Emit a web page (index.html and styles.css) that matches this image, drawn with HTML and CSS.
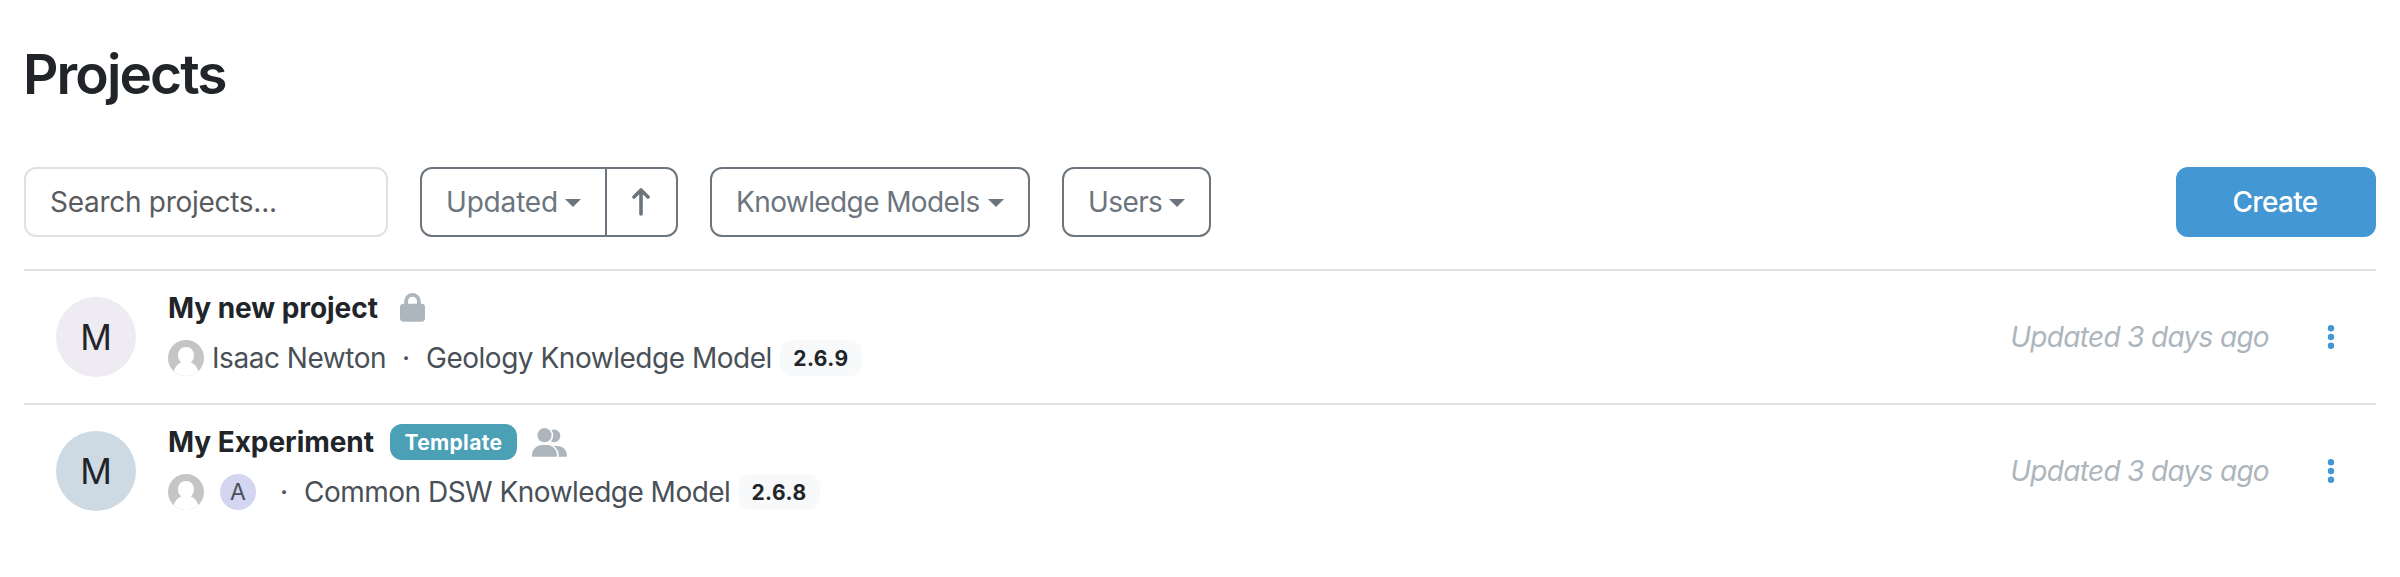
FILE: index.html
```html
<!DOCTYPE html>
<html lang="en">
<head>
<meta charset="utf-8">
<title>Projects</title>
<link rel="stylesheet" href="styles.css">
</head>
<body>
<svg class="defs" aria-hidden="true">
  <symbol id="person" viewBox="0 0 36 36">
    <circle cx="18" cy="18" r="18" fill="#c5c5c5"/>
    <path fill="#fff" d="M18 7c4.700 0 8 3.500 8 8.200 0 3-1.300 5.700-3.200 7.200 3.700 1.300 6.300 4.300 7.500 8.600C26.800 34.400 22.600 36 18 36S9.200 34.400 5.700 31c1.200-4.300 3.800-7.300 7.500-8.600C11.300 20.900 10 18.200 10 15.200 10 10.500 13.300 7 18 7z"/>
  </symbol>
  <symbol id="dots" viewBox="0 0 8 24">
    <circle cx="4" cy="3.200" r="3.200"/><circle cx="4" cy="12" r="3.200"/><circle cx="4" cy="20.800" r="3.200"/>
  </symbol>
</svg>
<main class="page">
  <h1 class="title">Projects</h1>
  <div class="toolbar">
    <input class="search" type="text" placeholder="Search projects...">
    <div class="group">
      <button class="btn btn-sort"><span class="t-updated">Updated</span><i class="caret"></i></button>
      <button class="btn btn-dir"><svg width="18" height="28" viewBox="0 0 18 28" fill="none" stroke="currentColor" stroke-width="3.600" stroke-linecap="round" stroke-linejoin="round"><path d="M9 26V2M2 9L9 2l7 7"/></svg></button>
    </div>
    <button class="btn btn-km"><span class="t-km">Knowledge Models</span><i class="caret"></i></button>
    <button class="btn btn-users"><span class="t-users">Users</span><i class="caret"></i></button>
    <button class="create">Create</button>
  </div>
  <div class="list">
    <article class="row">
      <div class="avatar avatar-lilac">M</div>
      <div class="info">
        <div class="line">
          <span class="name">My new project</span>
          <svg class="lock" viewBox="0 0 25 29"><path fill="none" stroke="#adb5bd" stroke-width="3.800" d="M6.100 13V8.300a6.400 6.400 0 0 1 12.800 0V13"/><rect y="10.700" width="25" height="18" rx="3.600" fill="#adb5bd"/></svg>
        </div>
        <div class="line sub">
          <svg class="face"><use href="#person"/></svg>
          <span class="owner">Isaac Newton</span>
          <span class="sep">·</span>
          <span class="model">Geology Knowledge Model</span>
          <span class="version">2.6.9</span>
        </div>
      </div>
      <div class="when">Updated 3 days ago</div>
      <svg class="menu"><use href="#dots"/></svg>
    </article>
    <article class="row">
      <div class="avatar avatar-blue">M</div>
      <div class="info">
        <div class="line">
          <span class="name">My Experiment</span>
          <span class="template">Template</span>
          <svg class="people" viewBox="0 0 36 29" fill="#adb5bd"><circle cx="12.500" cy="7.200" r="7.100"/><path d="M19.500 1.900a6.400 6.400 0 1 1-.6 11.600 9.300 9.300 0 0 0 .6-11.600zM10.300 17h4.400C20.400 17 25 21.500 25 27.200c0 .9-.7 1.600-1.600 1.600H1.600C.7 28.800 0 28.100 0 27.200 0 21.500 4.600 17 10.300 17zM21.500 17.900h3.800c5.400 0 9.700 4.100 9.700 9.500 0 .8-.6 1.400-1.400 1.400h-7.200c.3-.5.400-1 .4-1.600 0-3.700-1.900-7.200-5.300-9.300z"/></svg>
        </div>
        <div class="line sub">
          <svg class="face"><use href="#person"/></svg>
          <span class="initial">A</span>
          <span class="sep sep-wide">·</span>
          <span class="model model-common">Common DSW Knowledge Model</span>
          <span class="version">2.6.8</span>
        </div>
      </div>
      <div class="when">Updated 3 days ago</div>
      <svg class="menu"><use href="#dots"/></svg>
    </article>
  </div>
</main>
</body>
</html>
```
FILE: styles.css
```css
* { box-sizing: border-box; }
body {
  margin: 0;
  background: #fff;
  color: #212529;
  font: 400 28px/42px Inter, "Liberation Sans", sans-serif;
}
.defs { position: absolute; width: 0; height: 0; }
.page { padding: 41px 24px 0; }
.title {
  margin: 0 0 59px -1px;
  font-size: 55px;
  line-height: 67px;
  font-weight: 600;
  letter-spacing: -1.9px;
}
.toolbar { display: flex; height: 70px; margin-bottom: 32px; }
.search {
  width: 364px;
  margin-right: 32px;
  padding: 0 24px;
  border: 2px solid #dee2e6;
  border-radius: 12px;
  font: inherit;
  letter-spacing: -0.28px;
}
.search::placeholder { color: #595c5f; opacity: 1; }
.btn {
  display: flex;
  align-items: center;
  padding: 0 0 0 24px;
  border: 2px solid #6c757d;
  border-radius: 12px;
  background: #fff;
  color: #6c757d;
  font: inherit;
  white-space: nowrap;
}
.group { display: flex; margin-right: 32px; }
.btn-sort { width: 187px; border-radius: 12px 0 0 12px; }
.btn-dir {
  width: 73px;
  margin-left: -2px;
  padding: 0 1px 0 0;
  justify-content: center;
  border-radius: 0 12px 12px 0;
}
.btn-km { width: 320px; margin-right: 32px; }
.btn-users { width: 149px; }
.t-updated { width: 119px; text-align: left; letter-spacing: -0.18px; }
.t-km { width: 252px; text-align: left; letter-spacing: -0.6px; }
.t-users { width: 81px; text-align: left; letter-spacing: -0.6px; }
.caret {
  margin-top: 2px;
  border: 8px solid transparent;
  border-top-color: #6c757d;
  border-bottom: 0;
}
.create {
  width: 200px;
  margin-left: auto;
  padding: 0 2px 0 0;
  border: 0;
  border-radius: 12px;
  background: #4397d2;
  color: #fff;
  font: inherit;
  font-weight: 500;
  letter-spacing: -0.7px;
}
.row {
  display: flex;
  align-items: center;
  height: 134px;
  padding: 0 41px 0 32px;
  border-top: 2px solid #dee2e6;
}
.avatar {
  width: 80px;
  height: 80px;
  margin-right: 32px;
  border-radius: 50%;
  font-size: 35px;
  line-height: 80px;
  text-align: center;
}
.avatar-lilac { background: #eeebf3; }
.avatar-blue { background: #cddae3; }
.info { padding-bottom: 8px; }
.line { display: flex; align-items: center; height: 42px; white-space: nowrap; }
.name { font-weight: 700; letter-spacing: -0.05px; }
.lock { width: 25px; height: 29px; margin: 0 0 1px 22px; }
.people { width: 36px; height: 29px; margin-left: 15px; }
.template, .version {
  height: 36px;
  border-radius: 12px;
  font-size: 21px;
  font-weight: 700;
  line-height: 38px;
  text-align: center;
}
.template {
  width: 127px;
  margin-left: 16px;
  background: #4ba0b5;
  color: #fff;
  letter-spacing: 0.33px;
}
.sub { margin-top: 8px; color: #495057; }
.face { width: 36px; height: 36px; }
.owner { width: 198px; padding-left: 8px; letter-spacing: -0.46px; }
.sep { width: 24px; }
.model { width: 354px; letter-spacing: -0.48px; }
.version { width: 82px; background: #f8f9fa; color: #212529; letter-spacing: 0.5px; }
.initial {
  width: 36px;
  height: 36px;
  margin-left: 16px;
  border-radius: 50%;
  background: #d3d5f1;
  font-size: 23px;
  line-height: 36px;
  text-align: center;
}
.sep-wide { width: 48px; padding-left: 24px; }
.model-common { width: 434px; letter-spacing: -0.51px; }
.when {
  margin-left: auto;
  color: #adb5bd;
  font-style: italic;
  letter-spacing: -0.68px;
}
.menu { width: 8px; height: 24px; margin-left: 58px; fill: #4397d2; }
```
